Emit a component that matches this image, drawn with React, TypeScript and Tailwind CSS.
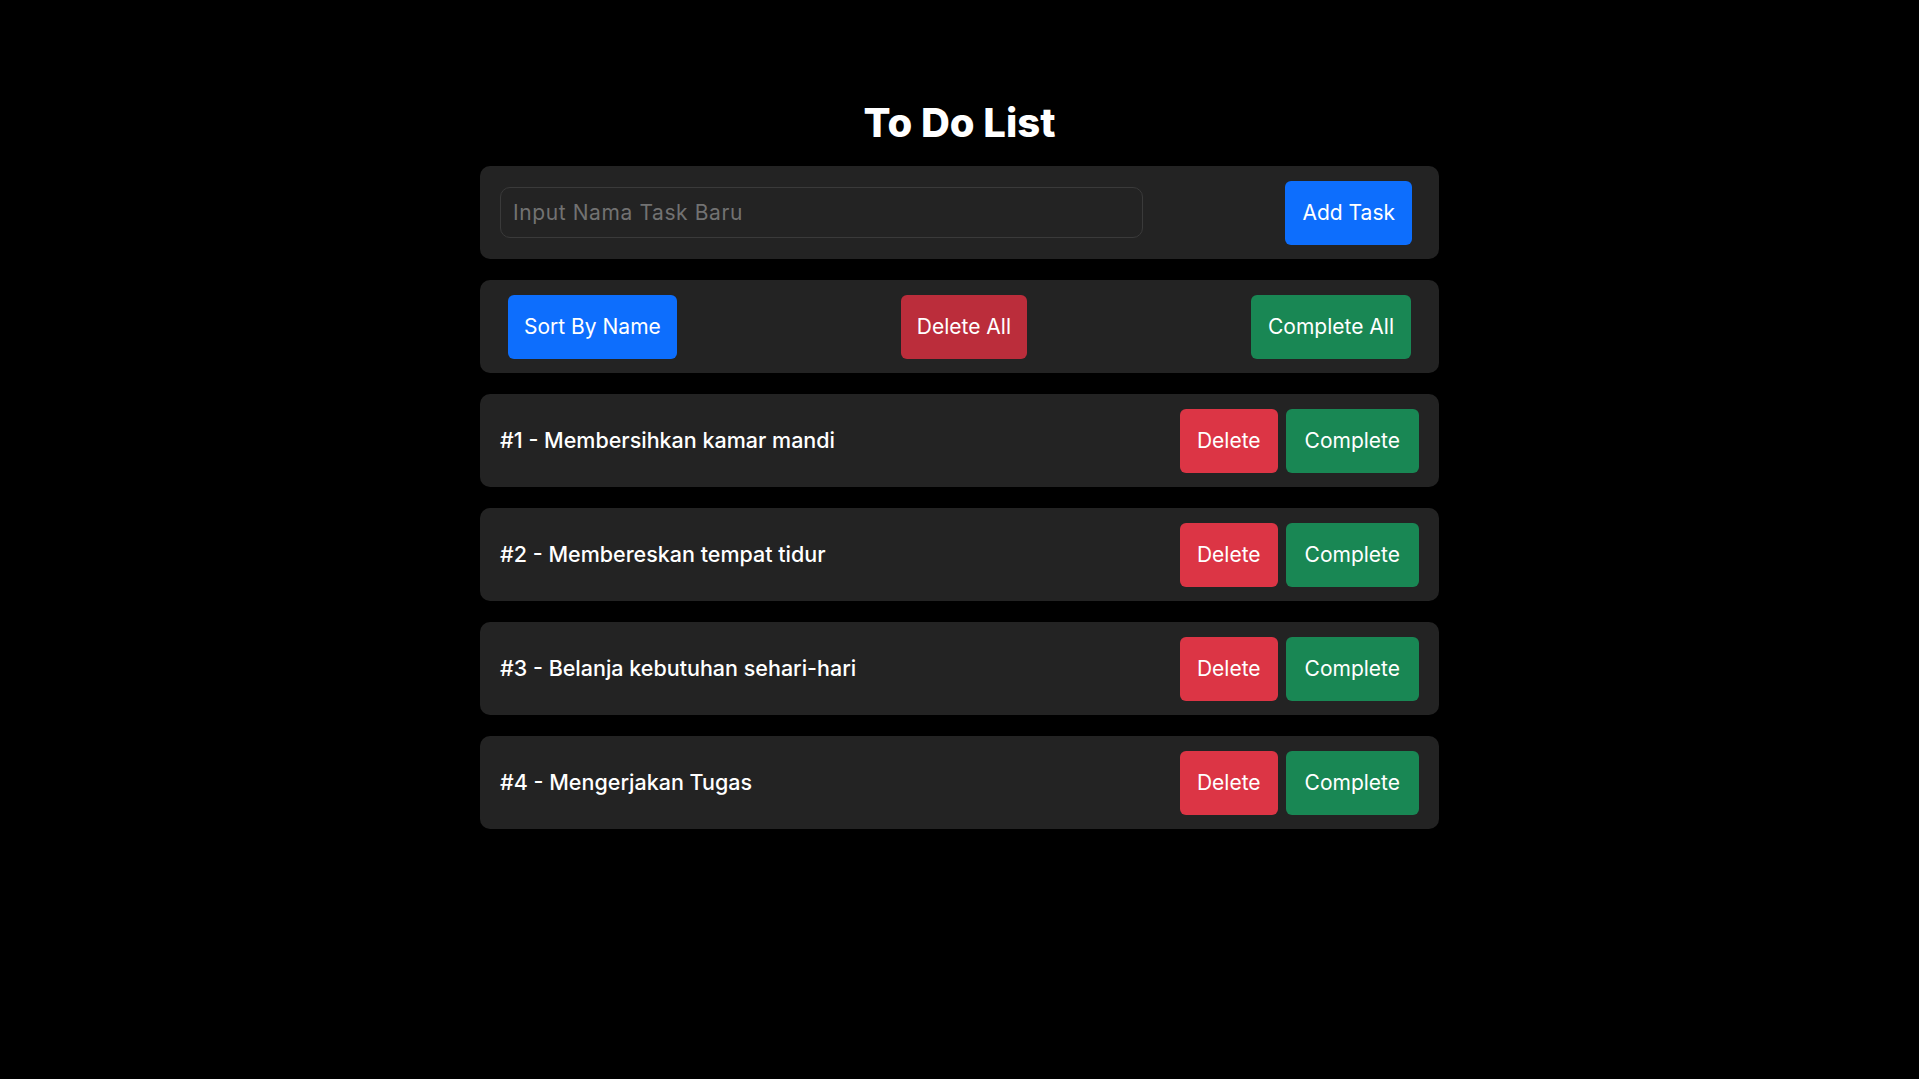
import { useState } from "react";

const initialTasks = [
  "Membersihkan kamar mandi",
  "Membereskan tempat tidur",
  "Belanja kebutuhan sehari-hari",
  "Mengerjakan Tugas",
];

export default function App() {
  const [tasks, setTasks] = useState(initialTasks);
  const [name, setName] = useState("");

  const addTask = () => {
    if (!name.trim()) return;
    setTasks([...tasks, name.trim()]);
    setName("");
  };

  return (
    <div className="min-h-screen bg-black font-['Inter',sans-serif] text-white">
      <div className="mx-auto flex w-[959px] flex-col gap-[21px] pt-[100px]">
        <h1 className="mb-[-1px] text-center text-[40px] font-extrabold leading-[46px]">To Do List</h1>

        {/* Add task */}
        <div className="flex h-[93px] items-center justify-between rounded-[10px] bg-[#232323] pl-5 pr-[27px]">
          <input
            value={name}
            onChange={(e) => setName(e.target.value)}
            placeholder="Input Nama Task Baru"
            className="h-[51px] w-[643px] rounded-[10px] border border-[#3a3a3a] bg-[#232323] px-3 text-[21px] text-white outline-none placeholder:tracking-[0.6px] placeholder:text-[#727272]"
          />
          <button
            onClick={addTask}
            className="h-16 rounded-[6px] bg-[#0d6efd] px-[17px] text-[21px]"
          >
            Add Task
          </button>
        </div>

        {/* Actions */}
        <div className="flex h-[93px] items-center justify-between rounded-[10px] bg-[#232323] px-7">
          <button
            onClick={() => setTasks([...tasks].sort())}
            className="h-16 rounded-[6px] bg-[#0d6efd] px-[16px] text-[21px]"
          >
            Sort By Name
          </button>
          <button
            onClick={() => setTasks([])}
            className="h-16 rounded-[6px] bg-[#bb2d3b] px-[16px] text-[21px]"
          >
            Delete All
          </button>
          <button className="h-16 rounded-[6px] bg-[#198754] px-[17px] text-[21px]">
            Complete All
          </button>
        </div>

        {/* Task rows */}
        {tasks.map((task, i) => (
          <div
            key={task + i}
            className="flex h-[93px] items-center justify-between rounded-[10px] bg-[#232323] px-5"
          >
            <span className="text-[21.5px] font-medium">
              #{i + 1} - {task}
            </span>
            <div className="flex gap-2">
              <button
                onClick={() => setTasks(tasks.filter((_, j) => j !== i))}
                className="h-16 rounded-[6px] bg-[#dc3545] px-[17px] text-[21px]"
              >
                Delete
              </button>
              <button className="h-16 rounded-[6px] bg-[#198754] px-[19px] text-[21px]">
                Complete
              </button>
            </div>
          </div>
        ))}
      </div>
    </div>
  );
}
